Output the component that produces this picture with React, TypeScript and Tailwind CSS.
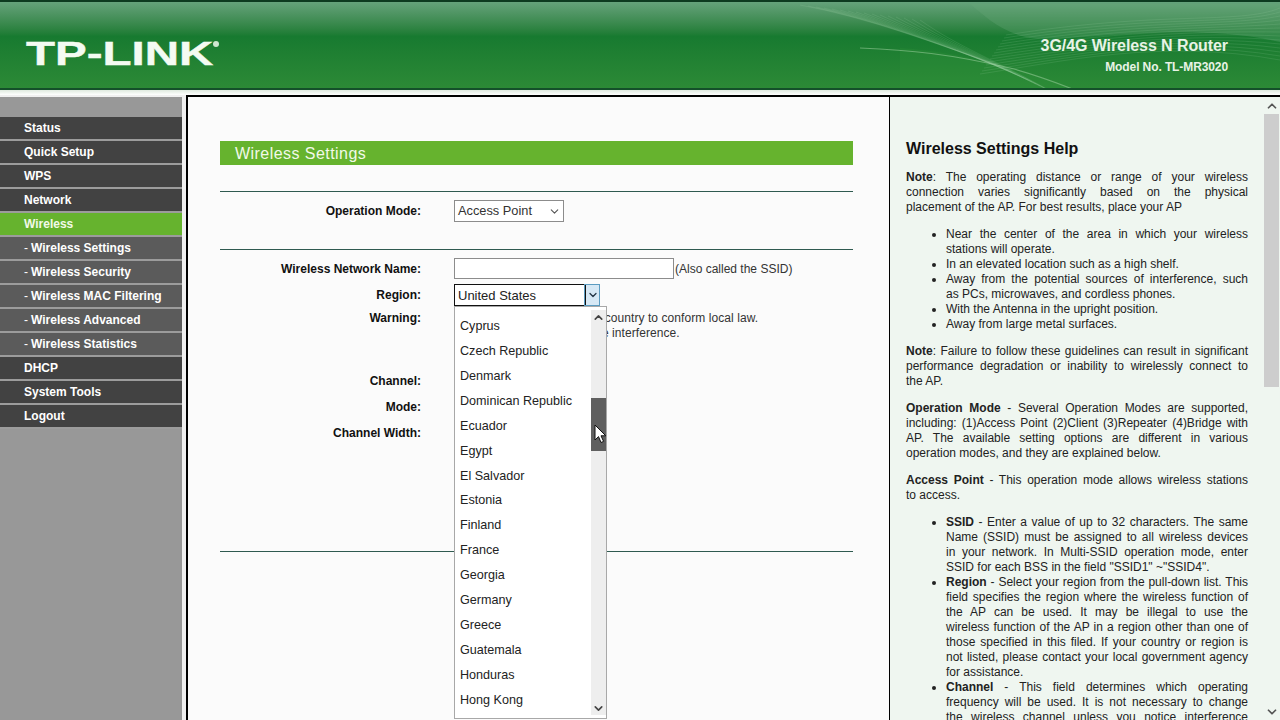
import type { ReactNode } from "react";
import { ChevronDown, ChevronUp } from "lucide-react";

const menu = [
  { label: "Status" },
  { label: "Quick Setup" },
  { label: "WPS" },
  { label: "Network" },
  { label: "Wireless", active: true },
  { label: "Wireless Settings", sub: true, current: true },
  { label: "Wireless Security", sub: true },
  { label: "Wireless MAC Filtering", sub: true },
  { label: "Wireless Advanced", sub: true },
  { label: "Wireless Statistics", sub: true },
  { label: "DHCP" },
  { label: "System Tools" },
  { label: "Logout" },
];

const countries = [
  "Cyprus",
  "Czech Republic",
  "Denmark",
  "Dominican Republic",
  "Ecuador",
  "Egypt",
  "El Salvador",
  "Estonia",
  "Finland",
  "France",
  "Georgia",
  "Germany",
  "Greece",
  "Guatemala",
  "Honduras",
  "Hong Kong",
];

function HeaderWaves() {
  const low = Array.from({ length: 16 }, (_, i) => i);
  const high = Array.from({ length: 14 }, (_, i) => i);
  return (
    <svg className="absolute right-0 top-0 h-[90px] w-[480px]" viewBox="0 0 480 90" fill="none">
      <path d="M170 2 L480 2 L480 40 C380 18 290 40 230 36 C200 30 185 14 170 2 Z" fill="#6aa97a" opacity="0.3" />
      <path d="M100 46 C130 48 160 52 210 66 C240 74 260 82 280 90 L100 90 Z" fill="#2f8f3a" opacity="0.35" />
      <path d="M60 46 C110 48 150 52 210 66 C240 74 260 82 280 90" stroke="#9ccf9f" strokeWidth="1.2" opacity="0.55" />
      {low.map((i) => (
        <path
          key={`l${i}`}
          d={`M${i * 8} ${3 + i} C${70 + i * 6} ${16 + i * 2} ${130 + i * 4} ${40 + i} ${196 + i * 4} ${62 + i * 2}`}
          stroke="#a9d6ae"
          strokeWidth="0.5"
          opacity="0.3"
        />
      ))}
      {high.map((i) => (
        <path
          key={`h${i}`}
          d={`M${180 + i * 2} ${72 - i * 3} C${260 + i * 8} ${60 - i * 4} ${360 + i * 6} ${36 - i} 480 ${58 - i * 4}`}
          stroke="#a9d6ae"
          strokeWidth="0.5"
          opacity="0.3"
        />
      ))}
    </svg>
  );
}

function Header() {
  return (
    <header className="relative h-[90px] shrink-0 overflow-hidden border-t-2 border-b-2 border-t-[#0d3a20] border-b-[#14502a] bg-gradient-to-b from-[#65a27b] via-[#177a30] via-40% to-[#2c8a36]">
      <HeaderWaves />
      <div className="absolute left-[26px] top-[33px] origin-left scale-x-[1.44] text-[33px] font-bold leading-[38px] text-[#f4fbf2] [-webkit-text-stroke:0.4px_#f4fbf2]">
        TP-LINK
      </div>
      <div className="absolute left-[213px] top-[39px] h-[6px] w-[6px] rounded-full bg-[#cfe6cf]" />
      <div className="absolute right-[52px] top-[34px] text-right text-[#e8f3e6]">
        <div className="text-[16px] font-bold leading-[20px] tracking-[-0.08px]">3G/4G Wireless N Router</div>
        <div className="mt-[2px] text-[12px] font-bold leading-[18px] tracking-[-0.1px]">Model No. TL-MR3020</div>
      </div>
    </header>
  );
}

function Sidebar() {
  return (
    <aside className="flex w-[188px] shrink-0 border-r-2 border-black bg-[#f0f0f0]">
      <nav className="mt-[2px] w-[182px] bg-[#989898] pt-[20px]">
        {menu.map((item) => (
          <div
            key={item.label}
            className={`flex h-[24px] items-center border-b-2 border-[#9c9c9c] pl-[24px] text-[12px] font-bold ${
              item.active ? "bg-[#66b32e] text-[#f2f9e8]" : item.sub ? "bg-[#5b5b5b] text-white" : "bg-[#424242] text-white"
            } ${item.current ? "text-[#a9cc3e]" : ""}`}
          >
            {item.sub && <span className="mr-[3px] font-normal">-</span>}
            {item.label}
          </div>
        ))}
      </nav>
    </aside>
  );
}

function FormRow({ label, height, children }: { label: string; height: string; children?: ReactNode }) {
  return (
    <div className={`flex items-center ${height}`}>
      <div className="w-[201px] shrink-0 text-right text-[12px] font-bold text-[#111]">{label}</div>
      <div className="ml-[33px] flex items-center">{children}</div>
    </div>
  );
}

function RegionDropdown() {
  return (
    <div className="absolute left-[266px] top-[209px] z-10 flex h-[413px] w-[153px] border border-[#a8a8a8] bg-white">
      <ul className="flex-1 pl-[5px] pt-[7px] text-[12.6px] text-[#222]">
        {countries.map((name) => (
          <li key={name} className="flex h-[24.93px] items-center">
            {name}
          </li>
        ))}
      </ul>
      <div className="relative my-[3px] flex w-[15px] flex-col items-center bg-[#eeeeee]">
        <ChevronUp size={13} strokeWidth={3} className="mt-[1px] text-[#444]" />
        <div className="absolute left-0 top-[88px] h-[53px] w-full bg-[#5f5f5f]" />
        <ChevronDown size={13} strokeWidth={3} className="absolute bottom-0 text-[#444]" />
      </div>
      {/* mouse pointer */}
      <svg className="absolute left-[139px] top-[117px]" width="13" height="20" viewBox="0 0 13 20">
        <path d="M1 1 L1 16 L4.5 12.6 L7 18.5 L9.6 17.4 L7 11.8 L11.8 11.8 Z" fill="#fff" stroke="#111" strokeWidth="1" />
      </svg>
    </div>
  );
}

function Main() {
  return (
    <main className="relative w-[701px] shrink-0 border-t-2 border-black bg-[#fbfbfb] px-[32px] pt-[44px]">
      <div className="flex h-[24px] w-[633px] items-center bg-[#66b32e] pl-[15px] pt-px text-[16px] tracking-[0.45px] text-[#f2f9e8]">
        Wireless Settings
      </div>
      <div className="w-[633px]">
        <hr className="mt-[26px] border-t border-[#2f5a50]" />
        <FormRow label="Operation Mode:" height="h-[22px] mt-[8px]">
          <div className="flex h-[22px] w-[110px] items-center justify-between border border-[#8c8c8c] bg-white pl-[3px] pr-[2px] text-[12.8px] text-[#333]">
            Access Point
            <ChevronDown size={13} className="text-[#555]" />
          </div>
        </FormRow>
        <hr className="mt-[27px] border-t border-[#2f5a50]" />
        <FormRow label="Wireless Network Name:" height="h-[21px] mt-[8px]">
          <div className="h-[21px] w-[220px] border border-[#8c8c8c] bg-white" />
          <span className="ml-px text-[12px] text-[#333]">(Also called the SSID)</span>
        </FormRow>
        <FormRow label="Region:" height="h-[22px] mt-[5px]">
          <div className="flex h-[22px] w-[146px] items-center justify-between border border-[#111] bg-white pl-[3px] text-[13px] text-[#222]">
            <span className="pt-px">United States</span>
            <div className="flex h-full w-[14px] items-center justify-center border-l border-[#111] bg-[#d6e8f5] outline outline-1 outline-[#5b9bc0]">
              <ChevronDown size={12} strokeWidth={2.5} className="text-[#234]" />
            </div>
          </div>
        </FormRow>
        <div className="mt-[4px] flex">
          <div className="w-[201px] shrink-0 pt-[1px] text-right text-[12px] font-bold leading-[15px] text-[#111]">Warning:</div>
          <div className="ml-[33px] pt-[1px] text-[12px] leading-[15px] tracking-[0.07px] text-[#333]">
            <div>Ensure you select a correct country to conform local law.</div>
            <div>Incorrect settings may cause interference.</div>
          </div>
        </div>
        <FormRow label="Channel:" height="h-[22px] mt-[29px]" />
        <FormRow label="Mode:" height="h-[22px] mt-[4px]" />
        <FormRow label="Channel Width:" height="h-[22px] mt-[4px]" />
        <hr className="mt-[107px] border-t border-[#2f5a50]" />
      </div>
      <RegionDropdown />
    </main>
  );
}

// one justified line of the help text, the breaks follow the router page
function Line({ children }: { children: ReactNode }) {
  return <div className="whitespace-nowrap [text-align-last:justify]">{children}</div>;
}

function Help() {
  return (
    <section className="flex min-w-0 flex-1 overflow-hidden border-t-2 border-black bg-[#eff6f0]">
      <div className="w-[373px] shrink-0 pl-[16px] pr-[15px] pt-[43px] text-[12px] leading-[15px] text-[#222]">
        <h2 className="mb-[12px] text-[16px] font-bold leading-[18px] text-[#111]">Wireless Settings Help</h2>
        <div>
          <Line><b>Note</b>: The operating distance or range of your wireless</Line>
          <Line>connection varies significantly based on the physical</Line>
          <div>placement of the AP. For best results, place your AP</div>
        </div>
        <ul className="my-[12px] list-disc pl-[40px]">
          <li>
            <Line>Near the center of the area in which your wireless</Line>
            <div>stations will operate.</div>
          </li>
          <li>In an elevated location such as a high shelf.</li>
          <li>
            <Line>Away from the potential sources of interference, such</Line>
            <div>as PCs, microwaves, and cordless phones.</div>
          </li>
          <li>With the Antenna in the upright position.</li>
          <li>Away from large metal surfaces.</li>
        </ul>
        <div>
          <Line><b>Note</b>: Failure to follow these guidelines can result in significant</Line>
          <Line>performance degradation or inability to wirelessly connect to</Line>
          <div>the AP.</div>
        </div>
        <div className="mt-[12px]">
          <Line><b>Operation Mode</b> - Several Operation Modes are supported,</Line>
          <Line>including: (1)Access Point (2)Client (3)Repeater (4)Bridge with</Line>
          <Line>AP. The available setting options are different in various</Line>
          <div>operation modes, and they are explained below.</div>
        </div>
        <div className="mt-[12px]">
          <Line><b>Access Point</b> - This operation mode allows wireless stations</Line>
          <div>to access.</div>
        </div>
        <ul className="mt-[12px] list-disc pl-[40px]">
          <li>
            <Line><b>SSID</b> - Enter a value of up to 32 characters. The same</Line>
            <Line>Name (SSID) must be assigned to all wireless devices</Line>
            <Line>in your network. In Multi-SSID operation mode, enter</Line>
            <div>SSID for each BSS in the field "SSID1" ~"SSID4".</div>
          </li>
          <li>
            <Line><b>Region</b> - Select your region from the pull-down list. This</Line>
            <Line>field specifies the region where the wireless function of</Line>
            <Line>the AP can be used. It may be illegal to use the</Line>
            <Line>wireless function of the AP in a region other than one of</Line>
            <Line>those specified in this filed. If your country or region is</Line>
            <Line>not listed, please contact your local government agency</Line>
            <div>for assistance.</div>
          </li>
          <li>
            <Line><b>Channel</b> - This field determines which operating</Line>
            <Line>frequency will be used. It is not necessary to change</Line>
            <Line>the wireless channel unless you notice interference</Line>
          </li>
        </ul>
      </div>
      <div className="relative flex flex-1 flex-col items-center">
        <ChevronUp size={14} strokeWidth={3} className="mt-[2px] text-[#555]" />
        <div className="mt-[1px] h-[273px] w-[15px] bg-[#cdcdcd]" />
        <ChevronDown size={14} strokeWidth={3} className="absolute bottom-[1px] text-[#555]" />
      </div>
    </section>
  );
}

export default function App() {
  return (
    <div className="flex h-[720px] w-[1280px] flex-col overflow-hidden bg-white font-['Liberation_Sans',Arial,sans-serif]">
      <Header />
      <div className="h-[5px] shrink-0 bg-gradient-to-b from-[#dfeadf] to-white" />
      <div className="flex min-h-0 flex-1">
        <Sidebar />
        <Main />
        <div className="w-[1px] shrink-0 bg-black" />
        <Help />
      </div>
    </div>
  );
}
